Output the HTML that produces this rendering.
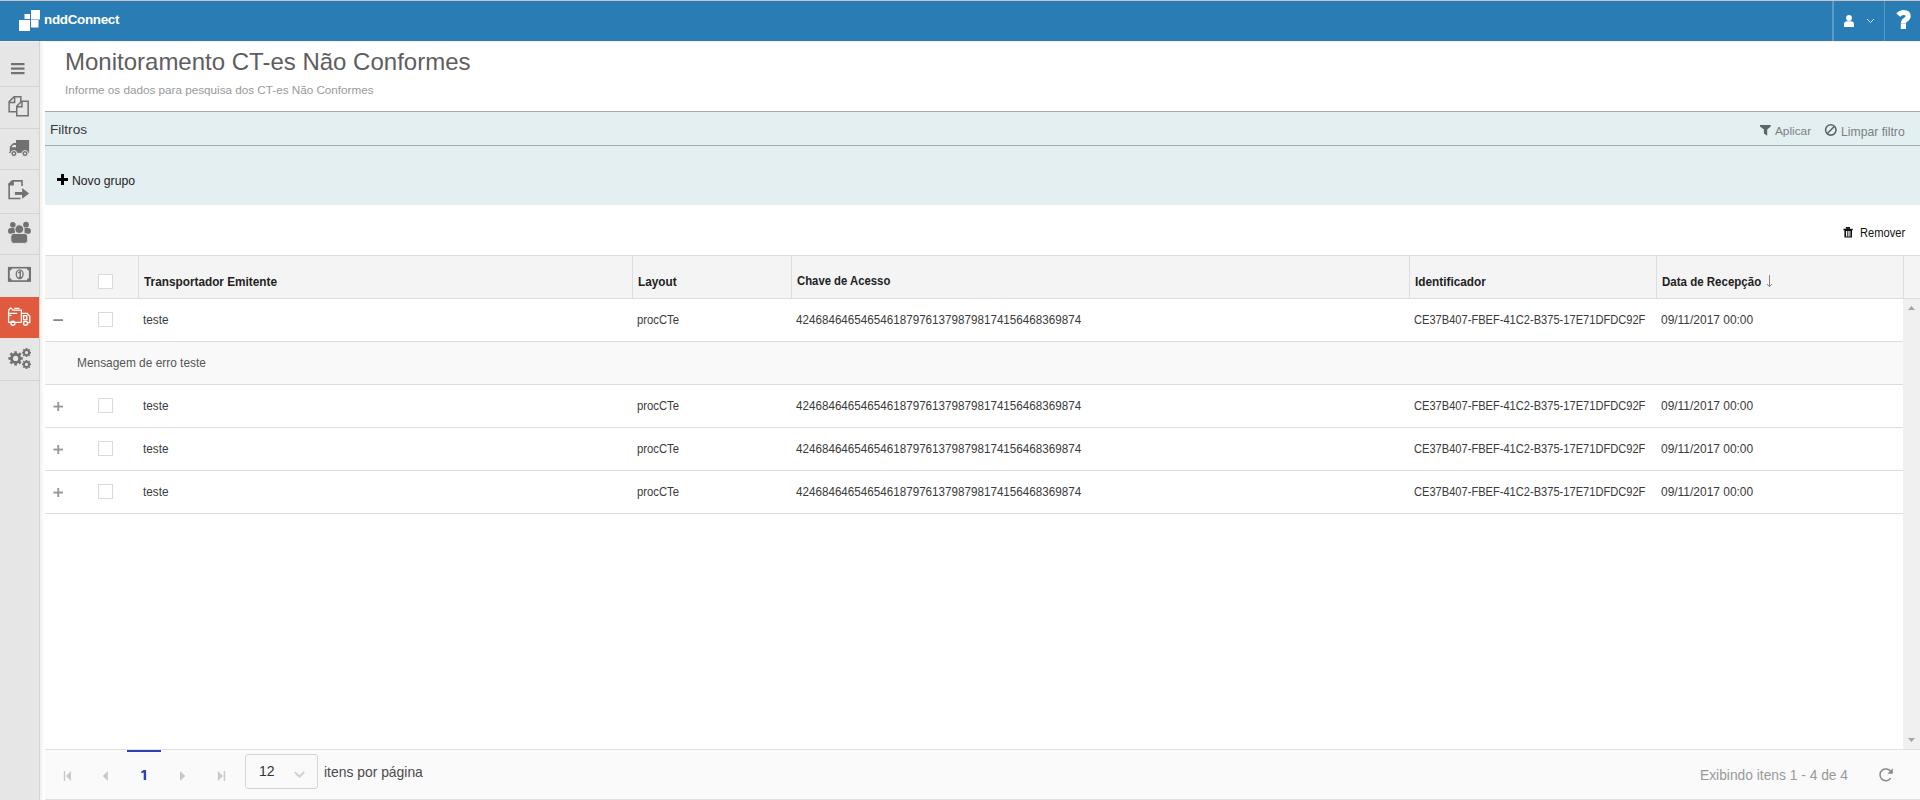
<!DOCTYPE html>
<html><head><meta charset="utf-8">
<style>
*{margin:0;padding:0;box-sizing:border-box}
html,body{width:1920px;height:800px;overflow:hidden;background:#fff;font-family:"Liberation Sans",sans-serif;color:#333}
.a{position:absolute}
.t{position:absolute;white-space:nowrap;line-height:1}
.hl{position:absolute;height:1px;background:#ddd}
.vl{position:absolute;width:1px;background:#ddd}
.cb{position:absolute;width:15px;height:15px;border:1px solid #dadada;background:#fff}
.cell{position:absolute;font-size:12px;color:#3a3a3a;white-space:nowrap;line-height:1;transform-origin:0 0}
.hcell{position:absolute;font-size:12.4px;font-weight:bold;color:#222;white-space:nowrap;line-height:1;transform:scaleX(0.952);transform-origin:0 0}
svg{position:absolute;left:0;top:0}
</style></head>
<body>
<div class="a" style="left:0;top:0;width:1920px;height:1px;background:#c9c4c1"></div>
<div class="a" style="left:0;top:1px;width:1920px;height:40px;background:#2a7db4"></div>
<div class="t" style="left:44px;top:12.5px;font-size:13.4px;font-weight:bold;color:#fff;letter-spacing:-0.3px">nddConnect</div>
<div class="a" style="left:1832px;top:1px;width:2px;height:40px;background:#5b9bc7"></div>
<div class="a" style="left:1884px;top:1px;width:1px;height:40px;background:#5a9ac6"></div>

<div class="a" style="left:0;top:41px;width:39px;height:759px;background:#e6e6e6"></div>
<div class="a" style="left:39px;top:41px;width:1px;height:759px;background:#d3d3cf"></div>
<div class="a" style="left:40px;top:41px;width:4px;height:759px;background:linear-gradient(to right,#f0f0ee,#fff)"></div>
<div class="a" style="left:0;top:41px;width:39px;height:1px;background:#f1ede9"></div>
<div class="a" style="left:45px;top:41px;width:1875px;height:1px;background:#f4f0ed"></div>
<div class="a" style="left:0;top:86px;width:39px;height:1px;background:#d4d4d4"></div>
<div class="a" style="left:0;top:128px;width:39px;height:1px;background:#d4d4d4"></div>
<div class="a" style="left:0;top:169px;width:39px;height:1px;background:#d4d4d4"></div>
<div class="a" style="left:0;top:213px;width:39px;height:1px;background:#d4d4d4"></div>
<div class="a" style="left:0;top:254px;width:39px;height:1px;background:#d4d4d4"></div>
<div class="a" style="left:0;top:297px;width:39px;height:41px;background:#e05b3d"></div>
<div class="a" style="left:0;top:380px;width:39px;height:1px;background:#d4d4d4"></div>

<div class="t" style="left:65px;top:50px;font-size:24px;color:#5e5e5e">Monitoramento CT-es Não Conformes</div>
<div class="t" style="left:65px;top:84px;font-size:11.7px;color:#999">Informe os dados para pesquisa dos CT-es Não Conformes</div>

<div class="a" style="left:45px;top:111px;width:1875px;height:94px;background:#e4eff2"></div>
<div class="a" style="left:45px;top:111px;width:1875px;height:1px;background:#a9a9a9"></div>
<div class="a" style="left:45px;top:145px;width:1875px;height:1px;background:#a9a9a9"></div>
<div class="t" style="left:50px;top:123px;font-size:13.6px;color:#383838">Filtros</div>
<div class="t" style="left:1775px;top:125.6px;font-size:11.8px;color:#7a7f80">Aplicar</div>
<div class="t" style="left:1841px;top:125.6px;font-size:12.2px;color:#7a7f80">Limpar filtro</div>
<div class="t" style="left:72px;top:175px;font-size:12.2px;color:#222">Novo grupo</div>
<div class="t" style="left:1860px;top:226.6px;font-size:12px;color:#111;transform:scaleX(0.927);transform-origin:0 0">Remover</div>

<div class="a" style="left:45px;top:256px;width:1875px;height:42px;background:#f4f4f4"></div>
<div class="hl" style="left:45px;top:255px;width:1875px"></div>
<div class="hl" style="left:45px;top:298px;width:1875px"></div>
<div class="vl" style="left:72px;top:256px;height:42px"></div>
<div class="vl" style="left:138px;top:256px;height:42px"></div>
<div class="vl" style="left:632px;top:256px;height:42px"></div>
<div class="vl" style="left:791px;top:256px;height:42px"></div>
<div class="vl" style="left:1409px;top:256px;height:42px"></div>
<div class="vl" style="left:1656px;top:256px;height:42px"></div>
<div class="vl" style="left:1903px;top:256px;height:42px"></div>
<div class="cb" style="left:98px;top:274px"></div>
<div class="hcell" style="left:144.4px;top:276.3px">Transportador Emitente</div>
<div class="hcell" style="left:638px;top:276.3px">Layout</div>
<div class="hcell" style="left:797px;top:276.3px;font-size:11.9px">Chave de Acesso</div>
<div class="hcell" style="left:1415px;top:276.3px">Identificador</div>
<div class="hcell" style="left:1662px;top:276.3px;font-size:12.1px">Data de Recepção</div>

<div class="a" style="left:45px;top:342px;width:1858px;height:42px;background:#f9f9f9"></div>
<div class="hl" style="left:45px;top:341px;width:1858px"></div>
<div class="hl" style="left:45px;top:384px;width:1858px"></div>
<div class="hl" style="left:45px;top:427px;width:1858px"></div>
<div class="hl" style="left:45px;top:470px;width:1858px"></div>
<div class="hl" style="left:45px;top:513px;width:1858px"></div>
<div class="t" style="left:77px;top:358px;font-size:11.9px;color:#555">Mensagem de erro teste</div>
<div class="cb" style="left:98px;top:312px"></div>
<div class="cell" style="left:143px;top:313.6px;transform:scaleX(0.98)">teste</div>
<div class="cell" style="left:637px;top:313.6px;transform:scaleX(0.94)">procCTe</div>
<div class="cell" style="left:796px;top:313.6px;transform:scaleX(0.971)">42468464654654618797613798798174156468369874</div>
<div class="cell" style="left:1414px;top:313.6px;transform:scaleX(0.925)">CE37B407-FBEF-41C2-B375-17E71DFDC92F</div>
<div class="cell" style="left:1661px;top:313.6px;transform:scaleX(0.996)">09/11/2017 00:00</div>
<div class="cb" style="left:98px;top:398px"></div>
<div class="cell" style="left:143px;top:399.6px;transform:scaleX(0.98)">teste</div>
<div class="cell" style="left:637px;top:399.6px;transform:scaleX(0.94)">procCTe</div>
<div class="cell" style="left:796px;top:399.6px;transform:scaleX(0.971)">42468464654654618797613798798174156468369874</div>
<div class="cell" style="left:1414px;top:399.6px;transform:scaleX(0.925)">CE37B407-FBEF-41C2-B375-17E71DFDC92F</div>
<div class="cell" style="left:1661px;top:399.6px;transform:scaleX(0.996)">09/11/2017 00:00</div>
<div class="cb" style="left:98px;top:441px"></div>
<div class="cell" style="left:143px;top:442.6px;transform:scaleX(0.98)">teste</div>
<div class="cell" style="left:637px;top:442.6px;transform:scaleX(0.94)">procCTe</div>
<div class="cell" style="left:796px;top:442.6px;transform:scaleX(0.971)">42468464654654618797613798798174156468369874</div>
<div class="cell" style="left:1414px;top:442.6px;transform:scaleX(0.925)">CE37B407-FBEF-41C2-B375-17E71DFDC92F</div>
<div class="cell" style="left:1661px;top:442.6px;transform:scaleX(0.996)">09/11/2017 00:00</div>
<div class="cb" style="left:98px;top:484px"></div>
<div class="cell" style="left:143px;top:485.6px;transform:scaleX(0.98)">teste</div>
<div class="cell" style="left:637px;top:485.6px;transform:scaleX(0.94)">procCTe</div>
<div class="cell" style="left:796px;top:485.6px;transform:scaleX(0.971)">42468464654654618797613798798174156468369874</div>
<div class="cell" style="left:1414px;top:485.6px;transform:scaleX(0.925)">CE37B407-FBEF-41C2-B375-17E71DFDC92F</div>
<div class="cell" style="left:1661px;top:485.6px;transform:scaleX(0.996)">09/11/2017 00:00</div>

<div class="a" style="left:1903px;top:299px;width:17px;height:450px;background:#f0f0f0"></div>

<div class="a" style="left:45px;top:750px;width:1875px;height:49px;background:#fafafa"></div>
<div class="hl" style="left:45px;top:749px;width:1875px;background:#e0e0e0"></div>
<div class="hl" style="left:45px;top:799px;width:1875px;background:#e0e0e0"></div>
<div class="a" style="left:127px;top:750px;width:34px;height:2px;background:#3142b0"></div>

<div class="a" style="left:245px;top:754px;width:73px;height:35px;border:1px solid #d5d5d5;border-radius:3px;background:#fafafa"></div>
<div class="t" style="left:259px;top:764px;font-size:14px;color:#333">12</div>
<div class="t" style="left:324px;top:765.6px;font-size:13.9px;color:#4a4a4a">itens por página</div>
<div class="t" style="left:1700px;top:769px;font-size:13.8px;color:#999">Exibindo itens 1 - 4 de 4</div>

<svg width="1920" height="800" viewBox="0 0 1920 800">
 <!-- logo -->
 <g fill="#fff">
  <rect x="19" y="20" width="11" height="11"/>
  <rect x="24.5" y="14" width="5.5" height="5"/>
  <rect x="31" y="10" width="9" height="9.5"/>
  <rect x="31" y="20" width="7.5" height="7.5"/>
 </g>
 <!-- user -->
 <g fill="#fff">
  <circle cx="1849" cy="18" r="2.9"/>
  <path d="M1844,27 V24.5 Q1844,21.3 1847.2,21.3 H1850.8 Q1854,21.3 1854,24.5 V27 Z"/>
 </g>
 <path d="M1867,19 L1870.5,22.5 L1874,19" fill="none" stroke="#d8e6f0" stroke-width="1"/>
 <!-- question -->
 <g fill="none" stroke="#fff" stroke-width="5">
  <path d="M1898.3,15.2 Q1900.5,12.5 1903.5,12.5 Q1908.2,12.6 1908.2,16 Q1908.2,18.2 1905.5,19.8 Q1903.4,21 1903.4,23.6"/>
 </g>
 <rect x="1900.8" y="23.6" width="5.2" height="5.4" fill="#fff"/>

 <!-- sidebar icons -->
 <g fill="#717171">
  <rect x="11" y="63" width="13.5" height="2.2"/>
  <rect x="11" y="67.5" width="13.5" height="2.2"/>
  <rect x="11" y="72" width="13.5" height="2.2"/>
 </g>
 <g fill="none" stroke="#717171" stroke-width="1.5" stroke-linejoin="miter">
  <path d="M20.85,102.3 V96.65 H14.1 L9.15,101.6 V111.7 H16.3"/>
  <path d="M14.6,96.65 V102.4 H9.15"/>
  <path d="M16.75,106.2 L21.6,101.15 H28.15 V115.85 H16.75 Z"/>
  <path d="M21.95,101.15 V106.75 H16.75"/>
 </g>
 <!-- truck -->
 <g fill="#717171">
  <rect x="16" y="140" width="13.1" height="12.9"/>
  <path d="M9.8,146.4 L13.4,143 H16.5 V152.9 H9 V152.2 H9.8 Z"/>
 </g>
 <path d="M11.2,147.3 L13.3,144.9 H16 V147.3 Z" fill="#e6e6e6"/>
 <g fill="#717171" stroke="#e6e6e6" stroke-width="1">
  <circle cx="13.9" cy="153.5" r="3"/>
  <circle cx="25" cy="153.5" r="3"/>
 </g>
 <g fill="#e6e6e6"><circle cx="13.9" cy="153.5" r="1.1"/><circle cx="25" cy="153.5" r="1.1"/></g>
 <!-- export -->
 <g fill="none" stroke="#717171" stroke-width="1.6">
  <path d="M22,186 V180.9 H12.6 L9.15,184.2 V198.45 H20.5"/>
 </g>
 <g fill="#717171">
  <path d="M8.3,183.8 L12.6,180.1 H13.9 V185.5 H8.3 Z"/>
  <rect x="14.9" y="192" width="7.9" height="2.9"/>
  <path d="M22.1,188.1 V198.8 L29.1,193.45 Z"/>
 </g>
 <!-- users -->
 <g fill="#717171">
  <circle cx="12.8" cy="224.7" r="2.8"/>
  <circle cx="26" cy="224.7" r="2.9"/>
  <path d="M10.6,227.9 H15 V233.7 H10.1 Q8.1,233.7 8.1,231.7 V230.4 Q8.1,227.9 10.6,227.9 Z"/>
  <path d="M28.3,227.9 H24.5 V233.7 H28.8 Q30.8,233.7 30.8,231.7 V230.4 Q30.8,227.9 28.3,227.9 Z"/>
 </g>
 <g fill="#717171" stroke="#e6e6e6" stroke-width="1">
  <circle cx="19.3" cy="229.2" r="4.4"/>
  <rect x="10.8" y="233.4" width="16.9" height="10" rx="3"/>
 </g>
 <!-- money -->
 <rect x="7.9" y="266.9" width="23.1" height="15" fill="#717171"/>
 <path d="M11.8,268.6 H26.9 A2,2 0 0 0 28.9,270.6 V278.25 A2,2 0 0 0 26.9,280.25 H11.8 A2,2 0 0 0 9.8,278.25 V270.6 A2,2 0 0 0 11.8,268.6 Z" fill="#e6e6e6"/>
 <ellipse cx="19.65" cy="274.2" rx="3.4" ry="4.3" fill="none" stroke="#717171" stroke-width="1.3"/>
 <path d="M18.3,273 L20.2,271.6 V277.2 M18.6,277.4 H21.8" fill="none" stroke="#717171" stroke-width="1.4"/>
 <!-- orange truck -->
 <g fill="none" stroke="#fff" stroke-width="1.3">
  <path d="M8.6,310.2 V322.3 H21.4"/>
  <path d="M8.6,310.2 L10.8,307.9 L13,310.2 H21.4 V322.3"/>
  <path d="M14.2,308.4 H19.5"/>
  <path d="M9.2,313.3 H17.2 M9.2,315.3 H11.5"/>
  <path d="M21.6,313.3 H27.2 L29.8,316.2 V322.6 H28"/>
  <path d="M23.6,315.6 H26.8 V319.6 H23.6 Z"/>
 </g>
 <g fill="none" stroke="#fff" stroke-width="1.4">
  <circle cx="12.9" cy="323.2" r="2"/>
  <circle cx="25.5" cy="323.2" r="2"/>
 </g>
 <!-- gears -->
 <g fill="#717171" fill-rule="evenodd">
  <path d="M20.96,357.16 L22.77,357.03 L22.77,359.77 L20.96,359.64 L20.27,361.31 L21.64,362.50 L19.70,364.44 L18.51,363.07 L16.84,363.76 L16.97,365.57 L14.23,365.57 L14.36,363.76 L12.69,363.07 L11.50,364.44 L9.56,362.50 L10.93,361.31 L10.24,359.64 L8.43,359.77 L8.43,357.03 L10.24,357.16 L10.93,355.49 L9.56,354.30 L11.50,352.36 L12.69,353.73 L14.36,353.04 L14.23,351.23 L16.97,351.23 L16.84,353.04 L18.51,353.73 L19.70,352.36 L21.64,354.30 L20.27,355.49Z M13.00,358.40 a2.6,2.6 0 1,0 5.2,0 a2.6,2.6 0 1,0 -5.2,0Z"/>
  <path d="M29.90,351.76 L31.00,351.67 L31.00,353.53 L29.90,353.44 L29.50,354.41 L30.34,355.13 L29.03,356.44 L28.31,355.60 L27.34,356.00 L27.43,357.10 L25.57,357.10 L25.66,356.00 L24.69,355.60 L23.97,356.44 L22.66,355.13 L23.50,354.41 L23.10,353.44 L22.00,353.53 L22.00,351.67 L23.10,351.76 L23.50,350.79 L22.66,350.07 L23.97,348.76 L24.69,349.60 L25.66,349.20 L25.57,348.10 L27.43,348.10 L27.34,349.20 L28.31,349.60 L29.03,348.76 L30.34,350.07 L29.50,350.79Z M24.90,352.60 a1.6,1.6 0 1,0 3.2,0 a1.6,1.6 0 1,0 -3.2,0Z"/>
  <path d="M29.90,363.56 L31.00,363.47 L31.00,365.33 L29.90,365.24 L29.50,366.21 L30.34,366.93 L29.03,368.24 L28.31,367.40 L27.34,367.80 L27.43,368.90 L25.57,368.90 L25.66,367.80 L24.69,367.40 L23.97,368.24 L22.66,366.93 L23.50,366.21 L23.10,365.24 L22.00,365.33 L22.00,363.47 L23.10,363.56 L23.50,362.59 L22.66,361.87 L23.97,360.56 L24.69,361.40 L25.66,361.00 L25.57,359.90 L27.43,359.90 L27.34,361.00 L28.31,361.40 L29.03,360.56 L30.34,361.87 L29.50,362.59Z M24.90,364.40 a1.6,1.6 0 1,0 3.2,0 a1.6,1.6 0 1,0 -3.2,0Z"/>
 </g>

 <!-- filter icons -->
 <path d="M1760,125 H1770.7 V126.4 L1767.2,129.5 V135.8 L1763.9,133.5 V129.5 L1760,126.4 Z" fill="#5f6566"/>
 <circle cx="1830.8" cy="129.95" r="5.2" fill="none" stroke="#5f6566" stroke-width="1.6"/>
 <path d="M1834.5,126.2 L1827.1,133.7" stroke="#5f6566" stroke-width="1.6"/>
 <!-- trash -->
 <g fill="#111">
  <rect x="1843.4" y="228.8" width="9.4" height="1.4"/>
  <rect x="1845.8" y="227" width="4.2" height="1.8"/>
  <path d="M1844.4,230 H1852 V237.6 H1844.4 Z M1846,231 V236.6 H1847 V231 Z M1847.7,231 V236.6 H1848.7 V231 Z M1849.4,231 V236.6 H1850.4 V231 Z" fill-rule="evenodd"/>
 </g>
 <!-- plus novo grupo -->
 <g fill="#000">
  <rect x="61" y="174" width="3" height="11"/>
  <rect x="57" y="178" width="11" height="3"/>
 </g>
 <!-- sort arrow -->
 <path d="M1769.5,275 V286.5 M1767,284 L1769.5,286.7 L1772,284" fill="none" stroke="#888" stroke-width="1"/>
 <!-- row expand icons -->
 <rect x="53.3" y="319.2" width="9.7" height="1.8" fill="#888"/>
 <g fill="#999">
  <rect x="53.4" y="405.6" width="9.6" height="1.9"/><rect x="57.3" y="402" width="1.9" height="9"/>
  <rect x="53.4" y="448.6" width="9.6" height="1.9"/><rect x="57.3" y="445" width="1.9" height="9"/>
  <rect x="53.4" y="491.6" width="9.6" height="1.9"/><rect x="57.3" y="488" width="1.9" height="9"/>
 </g>
 <!-- scrollbar arrows -->
 <path d="M1908,310 L1911.5,306 L1915,310 Z" fill="#a3a3a3"/>
 <path d="M1908,738 L1911.5,742 L1915,738 Z" fill="#a3a3a3"/>
 <!-- pager icons -->
 <path d="M143.6,770 H146.1 V779.9 H143.7 V772.6 L141.3,773.3 V771.4 Z" fill="#3142b8"/>
 <g fill="#c8c8c8">
  <rect x="63.8" y="771" width="1.4" height="10"/>
  <path d="M71,771 V781 L66,776 Z"/>
  <path d="M107.9,771 V781 L102.8,776 Z"/>
  <path d="M180,771 V781 L185.4,776 Z"/>
  <path d="M217.8,771 V781 L222.9,776 Z"/>
  <rect x="223.7" y="771" width="1.4" height="10"/>
 </g>
 <path d="M294.8,772 L299.5,776.6 L304.2,772" fill="none" stroke="#d0d0d0" stroke-width="2"/>
 <!-- refresh -->
 <path d="M1891,771.85 A5.9,5.9 0 1 0 1890.73,778.19" fill="none" stroke="#888" stroke-width="1.5"/>
 <path d="M1892.75,768.2 V773.7 H1887.5 Z" fill="#888"/>
</svg>
</body></html>
